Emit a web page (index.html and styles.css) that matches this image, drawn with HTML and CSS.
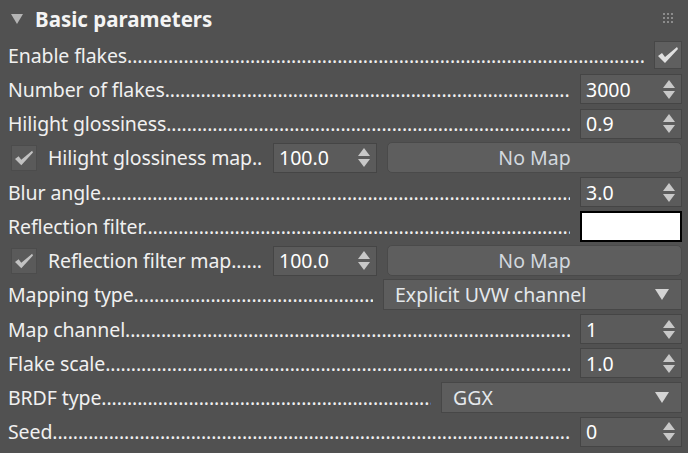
FILE: index.html
```html
<!DOCTYPE html>
<html>
<head>
<meta charset="utf-8">
<link rel="stylesheet" href="styles.css">
</head>
<body>
<div class="panel">
  <div class="header">
    <svg class="tri" width="14" height="12" viewBox="0 0 14 12"><path d="M1 1 H13 L7 11 Z" fill="#b4b4b4"/></svg>
    <span class="title">Basic parameters</span>
    <svg class="grip" width="10" height="10" viewBox="0 0 10 10" fill="#8c8c8c">
      <rect x="0" y="0" width="2" height="2"/><rect x="4" y="0" width="2" height="2"/><rect x="8" y="0" width="2" height="2"/>
      <rect x="0" y="4" width="2" height="2"/><rect x="4" y="4" width="2" height="2"/><rect x="8" y="4" width="2" height="2"/>
      <rect x="0" y="8" width="2" height="2"/><rect x="4" y="8" width="2" height="2"/><rect x="8" y="8" width="2" height="2"/>
    </svg>
  </div>

  <div class="row">
    <span class="label">Enable flakes</span>
    <span class="check big"><svg width="22" height="20" viewBox="0 0 22 20"><path d="M1 11 L5 8 L8 12 L20 2 L21 4 L8 18 Z" fill="#e0e0e0"/></svg></span>
  </div>

  <div class="row">
    <span class="label">Number of flakes</span>
    <span class="spin"><span class="val">3000</span><span class="arrows"><i class="up"></i><i class="dn"></i></span></span>
  </div>

  <div class="row">
    <span class="label">Hilight glossiness</span>
    <span class="spin"><span class="val">0.9</span><span class="arrows"><i class="up"></i><i class="dn"></i></span></span>
  </div>

  <div class="row maprow">
    <span class="check small"><svg width="20" height="18" viewBox="0 0 22 20"><path d="M1 11 L5 8 L8 12 L20 2 L21 4 L8 18 Z" fill="#c2c2c2"/></svg></span>
    <span class="label maplabel nodots">Hilight glossiness map..</span>
    <span class="spin mid"><span class="val">100.0</span><span class="arrows"><i class="up"></i><i class="dn"></i></span></span>
    <span class="btn">No Map</span>
  </div>

  <div class="row">
    <span class="label">Blur angle</span>
    <span class="spin"><span class="val">3.0</span><span class="arrows"><i class="up"></i><i class="dn"></i></span></span>
  </div>

  <div class="row">
    <span class="label">Reflection filter</span>
    <span class="swatch"></span>
  </div>

  <div class="row maprow">
    <span class="check small"><svg width="20" height="18" viewBox="0 0 22 20"><path d="M1 11 L5 8 L8 12 L20 2 L21 4 L8 18 Z" fill="#c2c2c2"/></svg></span>
    <span class="label maplabel">Reflection filter map</span>
    <span class="spin mid"><span class="val">100.0</span><span class="arrows"><i class="up"></i><i class="dn"></i></span></span>
    <span class="btn">No Map</span>
  </div>

  <div class="row">
    <span class="label">Mapping type</span>
    <span class="drop wide"><span class="val">Explicit UVW channel</span><i class="darr"></i></span>
  </div>

  <div class="row">
    <span class="label">Map channel</span>
    <span class="spin"><span class="val">1</span><span class="arrows"><i class="up"></i><i class="dn"></i></span></span>
  </div>

  <div class="row">
    <span class="label">Flake scale</span>
    <span class="spin"><span class="val">1.0</span><span class="arrows"><i class="up"></i><i class="dn"></i></span></span>
  </div>

  <div class="row">
    <span class="label">BRDF type</span>
    <span class="drop narrow"><span class="val">GGX</span><i class="darr"></i></span>
  </div>

  <div class="row">
    <span class="label">Seed</span>
    <span class="spin"><span class="val">0</span><span class="arrows"><i class="up"></i><i class="dn"></i></span></span>
  </div>
</div>
</body>
</html>
```

FILE: styles.css
```css
html, body {
  margin: 0;
  padding: 0;
  background: #515151;
}
body {
  width: 688px;
  height: 453px;
  overflow: hidden;
  font-family: "Noto Sans", "Open Sans", sans-serif;
  font-size: 19.5px;
  color: #f0f0f0;
}
.panel {
  padding: 0 6px 0 8px;
}
.header {
  height: 38px;
  display: flex;
  align-items: center;
}
.tri {
  margin-left: 2px;
  margin-right: 11px;
}
.title {
  font-weight: bold;
  font-size: 20.5px;
  color: #f4f4f4;
}
.grip {
  margin-left: auto;
  margin-right: 9px;
  margin-top: -2px;
}
.row {
  height: 34.25px;
  display: flex;
  align-items: center;
}
.label {
  flex: 1;
  min-width: 0;
  white-space: nowrap;
  overflow: hidden;
  margin-right: 10px;
  letter-spacing: -0.1px;
}
.label::after {
  content: "....................................................................................................................................................................";
}
.label.nodots::after {
  content: "";
}
.maplabel {
  flex: 0 0 215px;
  margin-left: 11px;
  margin-right: 10px;
}
.check {
  display: flex;
  align-items: center;
  justify-content: center;
  box-sizing: border-box;
}
.check.big {
  width: 28px;
  height: 28px;
  background: #5f5f5f;
  border: 1px solid #474747;
}
.check.small {
  width: 26px;
  height: 26px;
  margin-left: 3px;
  background: #5a5a5a;
  border: 1px solid #4c4c4c;
}
.spin {
  box-sizing: border-box;
  width: 102px;
  height: 30px;
  background: #5b5b5b;
  border: 1px solid #454545;
  display: flex;
  align-items: center;
  padding: 0 6px 0 5px;
  color: #ffffff;
}
.spin.mid {
  width: 104px;
  margin-right: 10px;
}
.val {
  flex: 1;
  white-space: nowrap;
}
.arrows {
  display: flex;
  flex-direction: column;
  gap: 3px;
}
.arrows i {
  display: block;
  width: 0;
  height: 0;
  border-left: 6px solid transparent;
  border-right: 6px solid transparent;
}
.arrows .up {
  border-bottom: 8px solid #c8c8c8;
}
.arrows .dn {
  border-top: 8px solid #c8c8c8;
}
.btn {
  flex: 1;
  box-sizing: border-box;
  height: 31px;
  background: #5e5e5e;
  border: 1px solid #4a4a4a;
  border-radius: 5px;
  display: flex;
  align-items: center;
  justify-content: center;
  color: #d2d8de;
}
.swatch {
  box-sizing: border-box;
  width: 102px;
  height: 31px;
  background: #ffffff;
  border: 2px solid #000000;
}
.drop {
  box-sizing: border-box;
  height: 31px;
  background: #5d5d5d;
  border: 1px solid #474747;
  display: flex;
  align-items: center;
  padding: 0 12px 0 11px;
  color: #e4e8ec;
}
.drop.wide {
  width: 299px;
  flex: none;
}
.drop.narrow {
  width: 241px;
}
.darr {
  display: block;
  width: 0;
  height: 0;
  border-left: 7px solid transparent;
  border-right: 7px solid transparent;
  border-top: 11px solid #d4d4d4;
}
```
